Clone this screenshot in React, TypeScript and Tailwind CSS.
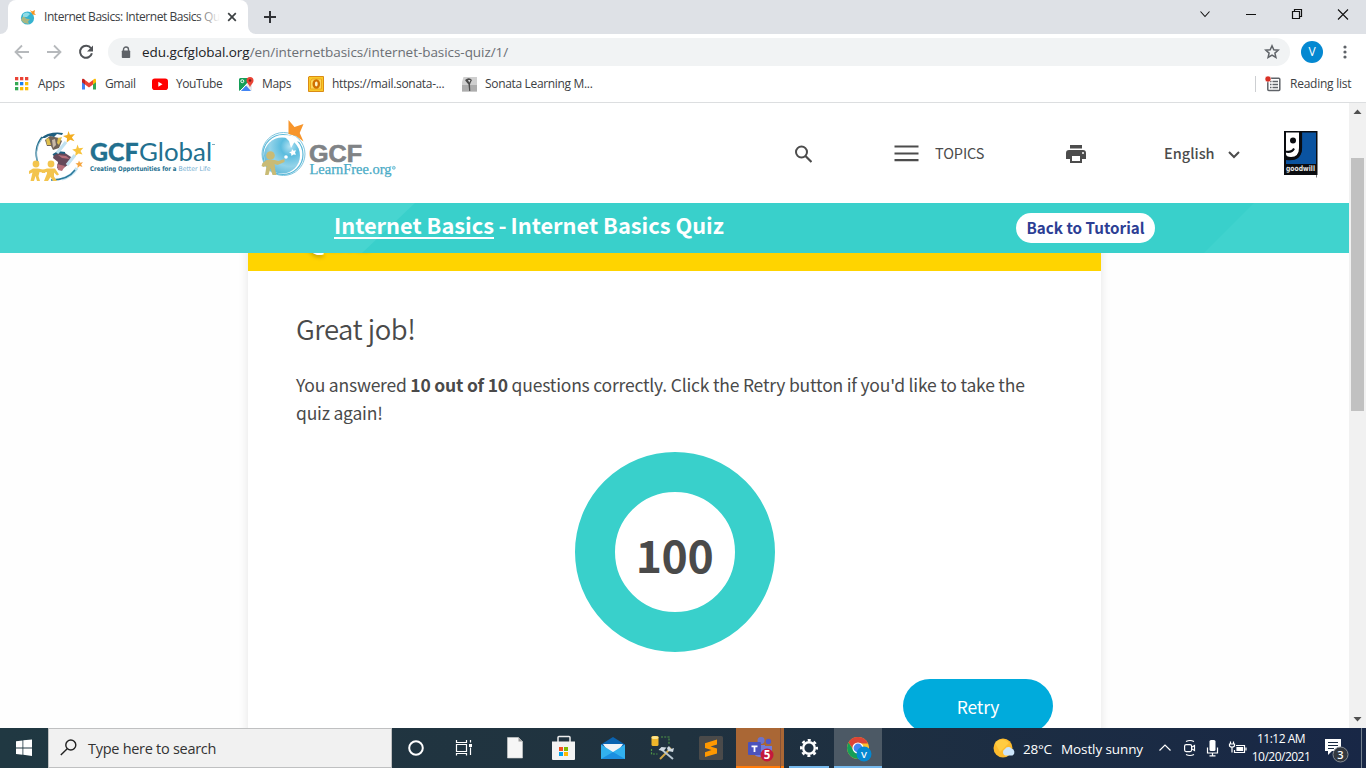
import type { ReactNode } from "react";

const SEGOE = "font-['Open_Sans','Noto_Sans',sans-serif]";
const SOURCE = "font-['Noto_Sans_CJK_SC',sans-serif]";

function Label({ className, children }: { className: string; children: ReactNode }) {
  return <span className={`block shrink-0 whitespace-nowrap ${className}`}>{children}</span>;
}

function Favicon() {
  return (
    <svg width="16" height="16" viewBox="0 0 16 16" className="shrink-0">
      <circle cx="7.500" cy="9" r="6.600" fill="#36b3d0" />
      <path d="M3 5q4-3 7 0l-3 3-4 0z" fill="#8edbe5" />
      <path d="M2 8.500l2-1 2 2 4 1-2 2 1 2.500-5-1-3-3z" fill="#a9b781" />
      <path d="M10 1l2 1.600L15 1l-.6 3.200L16 6l-3.600-.6z" fill="#f7931e" />
    </svg>
  );
}

function TabStrip() {
  return (
    <div className="flex h-[34px] shrink-0 bg-[#dee1e6]">
      <div className="flex w-2 items-end bg-white">
        <div className="h-[34px] w-2 rounded-br-lg bg-[#dee1e6]" />
      </div>
      <div className="flex h-[34px] w-[240px] items-center rounded-t-lg bg-white pl-3">
        <Favicon />
        <div className="relative ml-2 h-4 w-[176px] overflow-hidden">
          <Label className={`${SEGOE} text-[12px] leading-4 tracking-[-0.45px] text-[#3c4043]`}>
            Internet Basics: Internet Basics Quiz
          </Label>
          <div className="absolute right-0 top-0 h-4 w-6 bg-gradient-to-r from-white/0 to-white" />
        </div>
        <svg width="10" height="10" viewBox="0 0 10 10" className="ml-[7px] shrink-0">
          <path d="M1.200 1.200l7.600 7.600M8.800 1.200L1.200 8.800" stroke="#3c4043" strokeWidth="1.700" />
        </svg>
      </div>
      <div className="flex w-2 items-end bg-white">
        <div className="h-[34px] w-2 rounded-bl-lg bg-[#dee1e6]" />
      </div>
      <svg width="12" height="12" viewBox="0 0 12 12" className="ml-2 mt-[11px]">
        <path d="M6 0v12M0 6h12" stroke="#303236" strokeWidth="2" />
      </svg>
      <div className="flex-1" />
      <svg width="166" height="34" viewBox="0 0 166 34" fill="none" stroke="#111">
        <path d="M.5 11.500l4.500 5 4.500-5" strokeWidth="1.100" />
        <path d="M46 14.500h10" />
        <path d="M92.500 11.500h7v7h-7zM94.500 11.500v-2h7v7h-2" strokeWidth="1.200" />
        <path d="M138 9.500l10 10M148 9.500l-10 10" strokeWidth="1.100" />
      </svg>
    </div>
  );
}

function Toolbar() {
  return (
    <div className="flex h-[36px] shrink-0 items-center bg-white">
      <svg width="108" height="36" viewBox="0 0 108 36" fill="none" strokeWidth="1.800" className="shrink-0">
        <path d="M29 18H16M22 11.500L15.500 18l6.500 6.500" stroke="#b6b9bc" />
        <path d="M47 18h13M54 11.500l6.500 6.500-6.500 6.500" stroke="#b6b9bc" />
        <path d="M91 14.300a6 6 0 1 0 .9 4.900" stroke="#505357" strokeWidth="2" />
        <path d="M93 11.500v6h-6z" fill="#505357" />
      </svg>
      <div className="flex h-7 w-[1182px] shrink-0 items-center rounded-full bg-[#f1f3f4]">
        <svg width="10" height="13" viewBox="0 0 10 13" className="ml-[13px] shrink-0">
          <path d="M2.500 5V3.500a2.500 2.500 0 0 1 5 0V5" fill="none" stroke="#5f6368" strokeWidth="1.400" />
          <rect x=".8" y="4.500" width="8.400" height="7.500" rx=".8" fill="#5f6368" />
        </svg>
        <Label className={`${SEGOE} ml-[11px] w-[380px] text-[13.500px] leading-7 tracking-[-0.055px] text-[#6b6f74]`}>
          <span className="text-[#202124]">edu.gcfglobal.org</span>/en/internetbasics/internet-basics-quiz/1/
        </Label>
        <div className="flex-1" />
        <svg width="16" height="16" viewBox="0 0 16 16" className="mr-[10px]">
          <path d="M8 1.800l1.800 4 4.400.4-3.300 2.900 1 4.300L8 11.100l-3.900 2.300 1-4.300L1.800 6.200l4.400-.4z" fill="none" stroke="#5f6368" strokeWidth="1.500" />
        </svg>
      </div>
      <div className={`${SEGOE} ml-[11px] flex size-[22px] items-center justify-center rounded-full bg-[#0488d1] text-[12px] text-white`}>V</div>
      <svg width="4" height="16" viewBox="0 0 4 16" fill="#5f6368" className="ml-5">
        <circle cx="2" cy="3" r="1.600" />
        <circle cx="2" cy="8" r="1.600" />
        <circle cx="2" cy="13" r="1.600" />
      </svg>
    </div>
  );
}

function Bookmark({ icon, label, box, text }: { icon: ReactNode; label: string; box: string; text: string }) {
  return (
    <div className={`flex shrink-0 items-center ${box}`}>
      <div className="w-4 shrink-0">{icon}</div>
      <Label className={`${SEGOE} ml-2 text-[12px] leading-4 text-[#3c4043] ${text}`}>{label}</Label>
    </div>
  );
}

const appDots = ["#ea4335", "#ea4335", "#ea4335", "#34a853", "#1a80f0", "#fbbc05", "#34a853", "#fbbc05", "#fbbc05"];

function Bookmarks() {
  return (
    <div className="flex h-[33px] shrink-0 items-center border-b border-[#dcdee0] bg-white pb-[5px] pl-[14px]">
      <Bookmark
        box="w-[67px]"
        text="tracking-[-0.3px]"
        label="Apps"
        icon={
          <svg width="16" height="16" viewBox="0 0 16 16">
            {appDots.map((c, i) => (
              <rect key={i} x={1 + (i % 3) * 5} y={1 + Math.floor(i / 3) * 5} width="3.300" height="3.300" fill={c} />
            ))}
          </svg>
        }
      />
      <Bookmark
        box="w-[71px]"
        text="tracking-[-0.4px]"
        label="Gmail"
        icon={
          <svg width="16" height="16" viewBox="0 0 16 16">
            <path d="M1 4v9.500h3V8z" fill="#4285f4" />
            <path d="M15 4v9.500h-3V8z" fill="#34a853" />
            <path d="M12 4.500V8.500l3-2.300V4c0-1.700-1.700-1.900-3 0z" fill="#fbbc04" />
            <path d="M4 8.500V4L8 7l4-3v4.500L8 11.500z" fill="#ea4335" />
            <path d="M1 4v2.200l3 2.300V4C2.700 2.100 1 2.300 1 4z" fill="#c5221f" />
          </svg>
        }
      />
      <Bookmark
        box="w-[86px]"
        text="tracking-[-0.45px]"
        label="YouTube"
        icon={
          <svg width="16" height="16" viewBox="0 0 16 16">
            <rect y="2.500" width="16" height="11.500" rx="2.800" fill="#f00" />
            <path d="M6.300 5.800v5l4.200-2.500z" fill="#fff" />
          </svg>
        }
      />
      <Bookmark
        box="w-[70px]"
        text="tracking-[-0.35px]"
        label="Maps"
        icon={
          <svg width="16" height="16" viewBox="0 0 16 16">
            <rect x="1" y="2" width="13" height="13" rx="1.500" fill="#e8eaed" />
            <path d="M1 13.500V3.500Q1 2 2.500 2H11l2 6-4-1-6.500 8Q1 15 1 13.500z" fill="#159e58" />
            <path d="M3 15l5-5.500 5 5.500z" fill="#4285f4" />
            <path d="M2 15l10-10" stroke="#fff" strokeWidth="1" />
            <circle cx="4.300" cy="5.200" r="1.500" fill="none" stroke="#fff" />
            <path d="M8.500 4.500a3.500 3.500 0 0 1 7 0c0 2.500-2.500 3.500-3.500 7-1-3.500-3.500-4.500-3.500-7z" fill="#ea4335" />
            <circle cx="12" cy="4.500" r="1.300" fill="#7c2218" />
          </svg>
        }
      />
      <Bookmark
        box="w-[153px]"
        text="tracking-[-0.3px]"
        label="https://mail.sonata-..."
        icon={
          <svg width="16" height="16" viewBox="0 0 16 16">
            <path d="M1 .5h14.500v15H.5V1z" fill="#f8c928" stroke="#db8b15" />
            <path d="M4 3h9.500v10H2.500V5z" fill="#fbd75a" stroke="#eda41c" />
            <ellipse cx="8.300" cy="8" rx="2.600" ry="3.600" fill="#fff3c4" stroke="#d06f00" strokeWidth="2.400" />
          </svg>
        }
      />
      <Bookmark
        box="w-[160px]"
        text="tracking-[-0.33px]"
        label="Sonata Learning M..."
        icon={
          <svg width="16" height="16" viewBox="0 0 16 16">
            <path d="M2.500 1H16v14.500H1V6z" fill="#cfcfcf" />
            <path d="M1 9h15v6.500H1z" fill="#adadad" />
            <path d="M4 4q4-3.500 7 0l-1.300 2.500-.7 2 .3 6.500H8.200l-.7-6.500L5 5.500z" fill="#4b4b4b" />
            <path d="M7 4l2.500 0-1.200 2.500z" fill="#ddd" />
          </svg>
        }
      />
      <div className="flex-1" />
      <div className="h-4 w-px bg-[#cdcfd2]" />
      <svg width="16" height="16" viewBox="0 0 16 16" className="ml-[9px]">
        <rect x="2.800" y="2.300" width="12" height="12.200" rx="1" fill="none" stroke="#5f6368" strokeWidth="1.500" />
        <path d="M5 5.500h1.500M5 8.500h1.500M5 11.500h1.500M7.500 5.500H13M7.500 8.500H13M7.500 11.500H13" stroke="#5f6368" strokeWidth="1.300" />
        <circle cx="3" cy="3" r="3" fill="#d93025" stroke="#fff" strokeWidth=".5" />
      </svg>
      <Label className={`${SEGOE} ml-[9px] w-[76px] text-[12px] leading-4 tracking-[-0.25px] text-[#3c4043]`}>Reading list</Label>
    </div>
  );
}

function GlobalLogo() {
  return (
    <svg width="192" height="56" viewBox="0 0 192 56" className="shrink-0">
      <path d="M13 7A24 25 0 0 0 9 33" fill="none" stroke="#246f8e" strokeWidth="1.500" />
      <path d="M19 4Q5 12 8 31" fill="none" stroke="#8bb9cc" strokeWidth="1" />
      <path d="M12 8q9-7 22-5l-1 2-5-1-3 3-5-1-4 2z" fill="#1f5f7f" />
      <path d="M16 10l5-4 9 2 3 3-3 7-6 2-2-4-4 0z" fill="#6f6358" />
      <path d="M17 9l3-1 2 7-4 0zM29 8l4-1-3 8-2-2z" fill="#dfc04e" />
      <path d="M23 10l3-1 1 6-3 3z" fill="#c8b9a8" />
      <path d="M25 24q6-3 11-1l6 4-2 7-8 6-4-2 1-6-5-4z" fill="#66495a" />
      <path d="M29 25l8 1 4 3-8-1zM28 34l8 2-3 5-4-1z" fill="#b8707b" />
      <path d="M24 25l5-3 7 1" stroke="#1f5f7f" strokeWidth="1.800" fill="none" />
      <path d="M37 12L28 23M46 25L38 35M48 38Q43 46 33 49" stroke="#c2e2f1" strokeWidth="3.200" fill="none" />
      <path d="M46 40q-7 10-24 10" fill="none" stroke="#2a7899" strokeWidth="1.400" />
      <path d="M39.500 1l1.400 3.700 5-.8-3 3.500 2.600 3.800-4.300-1.400-3.500 2.800.3-4.400L34 6l4.300-1z" fill="#f3ae22" />
      <path d="M48.500 14.500l1.400 3.700 4.500-.5-2.900 3.300 2 3.500-4-1.100-3.200 2.500.4-4-3.500-2.300 4-.9z" fill="#f7c33d" />
      <path d="M50 30.500l1 2.300 3-.5-1.900 2.200 1.400 2.400-2.700-.8-2.300 1.800.2-2.800-2.300-1.600 2.700-.6z" fill="#f5a640" />
      <g fill="#f3c44d">
        <circle cx="7" cy="34" r="3.400" />
        <path d="M4 38.500h5l7 1.500v3l-5.500-1-1 4 1.500 5H8l-1.500-5L5 51H1.500l2-8.500L0 44v-3z" />
        <circle cx="22" cy="34" r="3.400" />
        <path d="M18 38.500h8l4 6-2 1-3-3v4l3 4.500h-4l-2.500-4-2.500 4h-4l3-7.500v-1.500l-5 1v-3z" />
      </g>
      <text x="61" y="31" fontFamily="Lato" fontWeight="900" fontSize="25.500" fill="#22708f" stroke="#22708f" strokeWidth=".3" textLength="48.500" lengthAdjust="spacingAndGlyphs">GCF</text>
      <text x="110" y="31" fontFamily="Lato" fontSize="25.500" fill="#22708f" textLength="73" lengthAdjust="spacingAndGlyphs">Global</text>
      <path d="M183 14.500h3" stroke="#7fa9bb" />
      <text x="61" y="41" fontFamily="DejaVu Sans" fontWeight="bold" fontSize="6.500" fill="#246f8e" textLength="86.500" lengthAdjust="spacingAndGlyphs">Creating Opportunities for a</text>
      <text x="149.500" y="41" fontFamily="DejaVu Sans" fontSize="6.500" fill="#70add0" textLength="32" lengthAdjust="spacingAndGlyphs">Better Life</text>
    </svg>
  );
}

function LearnFreeLogo() {
  return (
    <svg width="140" height="62" viewBox="0 0 140 62" className="shrink-0">
      <defs>
        <radialGradient id="orb" cx=".72" cy=".25" r=".85">
          <stop offset="0" stopColor="#b2e2f3" />
          <stop offset=".3" stopColor="#5bbcde" />
          <stop offset=".65" stopColor="#93d3e9" />
          <stop offset="1" stopColor="#5eb7d8" />
        </radialGradient>
      </defs>
      <circle cx="22.500" cy="35" r="21.500" fill="#fff" stroke="#7fc6df" strokeWidth="1" />
      <circle cx="22" cy="35.500" r="20" fill="#fff" stroke="#5ab8d8" strokeWidth="1.200" />
      <circle cx="21" cy="36.500" r="18" fill="url(#orb)" />
      <path d="M23 17q9-3 16 6l-5-1-4 7-2-7z" fill="#fff" />
      <path d="M27.500 1l6 7L42.500 5l-3.800 9 3.800 8.500L35 17l-7.500-2z" fill="#f7952b" />
      <path d="M31 30l1.500 1.700 2.500-.4-1 2.200 1 2.300-2.600-.3-1.900 1.500-.4-2.400-2-1.300 2.400-.8z" fill="#fff" />
      <circle cx="25" cy="38" r="1.800" fill="#fff" />
      <circle cx="9.500" cy="36.500" r="4.300" fill="#c9bb75" />
      <path d="M5.500 41h8l4 1 6-2v3l-7 3-3-1 1 7 1 4h-4l-2-7-2 7H4L5.500 47l-3 1-2-1 1-3z" fill="#c9bb75" />
      <text x="48" y="43" fontFamily="Liberation Sans" fontWeight="bold" fontSize="23" fill="#808386" stroke="#808386" strokeWidth=".6" textLength="53" lengthAdjust="spacingAndGlyphs">GCF</text>
      <text x="48.500" y="54.500" fontFamily="Liberation Serif" fontSize="14" fill="#49abc6" stroke="#49abc6" strokeWidth=".25" textLength="82" lengthAdjust="spacingAndGlyphs">LearnFree.org</text>
      <circle cx="132.800" cy="48.800" r="1.500" fill="#b6dfeb" stroke="#5fb5cd" strokeWidth=".7" />
    </svg>
  );
}

function SiteHeader() {
  return (
    <header className="flex h-[100px] shrink-0 items-center bg-white">
      <div className="pl-[29px] pt-[10px]">
        <GlobalLogo />
      </div>
      <div className="ml-[40px] pb-[6px]">
        <LearnFreeLogo />
      </div>
      <svg width="18" height="18" viewBox="0 0 18 18" className="ml-[393px] mt-px shrink-0">
        <circle cx="7.500" cy="7" r="5.500" fill="none" stroke="#4c4c4c" strokeWidth="2" />
        <path d="M11.500 11l6 6" stroke="#4c4c4c" strokeWidth="2.200" />
      </svg>
      <svg width="25" height="17" viewBox="0 0 25 17" className="ml-[82px] shrink-0">
        <path d="M.5 1.500H24.500M.5 8.500H24.500M.5 15.200H24.500" stroke="#4c4c4c" strokeWidth="2.200" />
      </svg>
      <Label className={`${SOURCE} ml-[16px] w-[50px] text-[14.500px] leading-6 tracking-[-0.1px] text-[#4c4c4c]`}>TOPICS</Label>
      <svg width="20" height="18" viewBox="0 0 20 18" className="ml-[81px] mt-[2px] shrink-0">
        <path d="M4 0h12v3.500H4zM3 5h14a3 3 0 0 1 3 3v6h-4v4H4v-4H0V8a3 3 0 0 1 3-3z" fill="#4c4c4c" />
        <path d="M6 11h8v5H6z" fill="#fff" />
        <circle cx="17" cy="8" r="1" fill="#fff" />
      </svg>
      <Label className={`${SOURCE} ml-[78px] w-[52px] text-[14.500px] font-medium leading-6 text-[#4c4c4c]`}>English</Label>
      <svg width="12" height="8" viewBox="0 0 12 8" className="ml-[12px] mt-[4px] shrink-0">
        <path d="M1 1l5 5 5-5" fill="none" stroke="#4c4c4c" strokeWidth="2" />
      </svg>
      <svg width="35" height="47" viewBox="0 0 35 47" className="ml-[44px] mt-[2px] shrink-0">
        <path d="M0 0h33.500v44H0z" fill="#0a0c10" />
        <path d="M18 1.500h14V33H2v-4q16 2 16-12z" fill="#0a53a0" />
        <path d="M2 1.500h13V17q0 9-8 9-5 0-5-3z" fill="#fff" />
        <path d="M17 1.500V17q-1 11-11 11H2" fill="none" stroke="#0a0c10" strokeWidth="2.200" />
        <circle cx="9" cy="9.500" r="3" fill="#0a0c10" />
        <path d="M1 20.500q7 1.500 9-3" fill="none" stroke="#0a0c10" strokeWidth="2" />
        <text x="2" y="40" fontFamily="DejaVu Sans" fontWeight="bold" fontSize="7.500" fill="#e4e4e4" textLength="29" lengthAdjust="spacingAndGlyphs">goodwill</text>
        <path d="M32.500 44v2.500" stroke="#777" />
      </svg>
    </header>
  );
}

function Banner() {
  return (
    <div className="relative z-10 flex h-[50px] shrink-0 bg-[#39d0cb]">
      <svg width="1349" height="50" viewBox="0 0 1349 50" className="absolute inset-0">
        <path d="M0 0H415L362 50H0z" fill="#47d5d0" />
        <path d="M1254 0h95v50H1204z" fill="#40d3ce" />
      </svg>
      <div className={`${SOURCE} relative flex w-full text-white`}>
        <Label className="ml-[334px] w-[682px] text-[21.800px] font-bold leading-[44px]">
          <span className="underline decoration-2 underline-offset-[3px]">Internet Basics</span>
          <span className="tracking-[-0.5px]"> - </span>
          Internet Basics Quiz
        </Label>
        <div className="mt-[10px] flex h-[30px] w-[139px] items-start justify-center rounded-full bg-white">
          <Label className="text-[15.200px] font-bold leading-[29px] text-[#2c3e94]">Back to Tutorial</Label>
        </div>
      </div>
    </div>
  );
}

function ResultCard() {
  return (
    <main className="flex min-h-0 flex-1 justify-center overflow-hidden bg-[#fefefe]">
      <div className={`${SOURCE} -mt-[30px] h-[540px] w-[853px] shrink-0 bg-white text-[#4a4a4a] shadow-[0_0_10px_rgba(0,0,0,0.1)]`}>
        <div className="flex h-[48px] items-end bg-[#ffd400] pb-[21px] pl-[52px]">
          <Label className="text-[32px] leading-[30px] font-bold text-white [text-shadow:0_2px_4px_rgba(0,0,0,0.25)]">Quiz</Label>
        </div>
        <div className="flex flex-col px-12">
          <Label className="mt-[37px] text-[27.500px] font-[350] leading-[40px] tracking-[-0.5px]">Great job!</Label>
          <div className="mt-[23px] text-[17.500px] leading-7 tracking-[-0.21px]">
            <Label className="">
              You answered <b>10 out of 10</b> questions correctly. Click the Retry button if you'd like to take the
            </Label>
            <Label className="">quiz again!</Label>
          </div>
          <div className="mt-[25px] flex size-[200px] items-center justify-center self-center rounded-full border-[40px] border-[#39d0cb] bg-white">
            <Label className="pt-[4px] text-[44.500px] leading-[60px] font-bold tracking-[-0.4px]">100</Label>
          </div>
          <div className="mt-[27px] flex h-[54px] w-[150px] items-center justify-center self-end rounded-full bg-[#00abdc] text-white">
            <Label className="pt-[1px] text-[17.500px] leading-[54px] tracking-[-0.22px]">Retry</Label>
          </div>
        </div>
      </div>
    </main>
  );
}

function Scrollbar() {
  return (
    <div className="flex w-[17px] shrink-0 flex-col items-center bg-[#f1f1f1]">
      <svg width="17" height="55" viewBox="0 0 17 55">
        <path d="M8.500 6.500l4 4.500h-8z" fill="#505050" />
      </svg>
      <div className="h-[253px] w-[13px] bg-[#c1c1c1]" />
      <div className="flex-1" />
      <svg width="17" height="17" viewBox="0 0 17 17">
        <path d="M8.500 10.500l4-4.500h-8z" fill="#505050" />
      </svg>
    </div>
  );
}

function Slot({ box, children }: { box: string; children: ReactNode }) {
  return (
    <div className={`flex h-10 shrink-0 justify-center ${box}`}>
      <svg width="48" height="40" viewBox="0 0 48 40" className="shrink-0">
        {children}
      </svg>
    </div>
  );
}

function Taskbar() {
  return (
    <footer className="flex h-10 shrink-0 bg-gradient-to-r from-[#203842] via-[#20323f] to-[#182746] text-white">
      <Slot box="w-12">
        <path d="M16 13.300l6.500-.9v7.200H16zM23.300 12.300L32 11.500v8.100h-8.700zM16 20.500h6.500v6.300L16 26zM23.300 20.500H32V28l-8.700-1.200z" fill="#fff" />
      </Slot>
      <div className="flex h-10 w-[344px] shrink-0 items-center border border-[#bfc0c1] bg-[#f1f1f1]">
        <svg width="17" height="17" viewBox="0 0 17 17" className="ml-[11px] mt-[-2px]" fill="none" stroke="#222" strokeWidth="1.400">
          <circle cx="10.800" cy="6" r="5" />
          <path d="M7.200 9.700L.8 16" />
        </svg>
        <Label className={`${SEGOE} ml-[11px] pt-px text-[14.500px] leading-6 tracking-[-0.28px] text-[#333]`}>Type here to search</Label>
      </div>
      <Slot box="w-12">
        <circle cx="24" cy="20" r="6.800" fill="none" stroke="#fff" strokeWidth="2" />
      </Slot>
      <Slot box="w-12">
        <path d="M16.500 12v2.500h10V12M16.500 27.500v-2h10v2M16.500 16.500h10v7h-10zM30.500 12v2.500M30.500 19.500V27" fill="none" stroke="#fff" strokeWidth="1.200" />
        <path d="M29 16h3v3h-3z" fill="#fff" />
      </Slot>
      <Slot box="ml-[2px] w-[49px]">
        <path d="M16.500 9.500H27.500l4 4V30h-15z" fill="#f6f6f6" stroke="#d0d0d0" strokeWidth=".6" />
        <path d="M27.500 9.500v4h4z" fill="#999" />
      </Slot>
      <Slot box="w-[49px]">
        <path d="M18 14V9.500q0-1 1-1h10q1 0 1 1V14" fill="none" stroke="#eee" strokeWidth="1.500" />
        <path d="M12 13.500h23V31q0 1-1 1H13q-1 0-1-1z" fill="#f3f3f3" />
        <path d="M19 19h4v4h-4z" fill="#f25022" />
        <path d="M24 19h4v4h-4z" fill="#7fba00" />
        <path d="M19 24h4v4h-4z" fill="#00a4ef" />
        <path d="M24 24h4v4h-4z" fill="#ffb900" />
      </Slot>
      <Slot box="w-[49px]">
        <path d="M12 16.500L24 9l12 7.500v5H12z" fill="#0b63b0" />
        <path d="M14 16h20l-6 9h-8z" fill="#f2f4f7" />
        <path d="M12 16.500l12 7.500 12-7.500V31H12z" fill="#32b1ee" />
        <path d="M12 31l12-7 12 7z" fill="#1c8fe0" />
      </Slot>
      <Slot box="w-[49px]">
        <rect x="13.500" y="8" width="7" height="10" rx="1.500" fill="#efb62a" />
        <ellipse cx="17" cy="9.500" rx="3.500" ry="1.500" fill="#ffe48a" />
        <path d="M23 9h8v7M13.500 21v5h6" fill="none" stroke="#4f9547" strokeWidth="1.200" strokeDasharray="2 1.200" />
        <path d="M22 31l11-11" stroke="#d3a847" strokeWidth="2" />
        <path d="M23 21l12 10" stroke="#b9c7d1" strokeWidth="2" />
        <path d="M20.500 22l3-3 5 .5-3 3.500zM31 18l2 3 3-1-1 4-5-1-1-3z" fill="#d0dae2" />
      </Slot>
      <Slot box="w-[49px]">
        <rect x="12" y="8" width="24" height="24" rx="1.500" fill="#4a4a4a" />
        <path d="M30 11.500v5l-6.500 2 6.500 2v5L18 29v-4.800l6.500-2.200-6.500-2v-4.800z" fill="#ff9800" />
      </Slot>
      <Slot box="ml-[1px] w-12 border-b-2 border-[#ff7b0a] bg-[#aa6735]">
        <path d="M44.500 0v40" stroke="#855237" />
        <circle cx="25" cy="12.500" r="3.500" fill="#6d73ca" />
        <circle cx="32.500" cy="13.500" r="2.700" fill="#5059c9" />
        <path d="M17 17h12v12h-6q-6-1-6-8zM29 18h7v6q-2 5-7 5z" fill="#747bd7" />
        <rect x="12" y="14" width="13" height="13" rx="1" fill="#4b53bc" />
        <path d="M15.500 17.500h6v1.700h-2.100V24h-1.800v-4.800h-2.100z" fill="#fff" />
        <circle cx="31" cy="27" r="6.500" fill="#c4183c" />
        <text x="31" y="31" textAnchor="middle" fontFamily="Open Sans" fontWeight="bold" fontSize="11.500" fill="#fff">5</text>
      </Slot>
      <Slot box="ml-[1px] w-12">
        <circle cx="24" cy="20" r="5.800" fill="none" stroke="#fff" strokeWidth="2.400" />
        <circle cx="24" cy="20" r="7.900" fill="none" stroke="#fff" strokeWidth="2.200" strokeDasharray="3.100 3.100" strokeDashoffset="1.500" />
        <path d="M4 39h40" stroke="#76b9ed" strokeWidth="2" />
      </Slot>
      <Slot box="ml-[1px] w-12 bg-[#4c5965]">
        <circle cx="24" cy="20" r="11" fill="#fbc02d" />
        <path d="M14.500 14.500A11 11 0 0 1 34 15.500H24l-4 7z" fill="#db4437" />
        <path d="M14.500 14.500A11 11 0 0 0 24 31l4-8h-8z" fill="#159e58" />
        <circle cx="24" cy="20" r="5" fill="#4285f4" stroke="#fff" strokeWidth="1.200" />
        <circle cx="30" cy="26" r="7.500" fill="#0488d1" />
        <text x="30" y="29.500" textAnchor="middle" fontFamily="Open Sans" fontWeight="600" fontSize="9.500" fill="#fff">V</text>
        <path d="M0 39h48" stroke="#76b9ed" strokeWidth="2" />
      </Slot>
      <div className="flex-1" />
      <div className={`${SEGOE} flex h-10 w-[374px] shrink-0 items-center`}>
        <svg width="24" height="24" viewBox="0 0 24 24">
          <circle cx="11" cy="12" r="9.500" fill="#fdbb2d" />
          <path d="M3 7a9 9 0 0 1 14 0l-9 9z" fill="#ffd34b" opacity=".7" />
          <path d="M13 19.500a3.600 3.600 0 0 1 0-6.500 4 4 0 0 1 6.500-.5 3.800 3.800 0 0 1 1 7z" fill="#cbe5fb" />
        </svg>
        <Label className="ml-[7px] w-[38px] pt-px text-[13.500px] leading-5 tracking-[-0.25px]">28°C</Label>
        <Label className="w-[98px] pt-px text-[13.500px] leading-5 tracking-[-0.1px]">Mostly sunny</Label>
        <svg width="90" height="20" viewBox="0 0 90 20" fill="none" stroke="#fff" strokeWidth="1.200">
          <path d="M.5 12.500L6 7l5.500 5.500" />
          <rect x="25.600" y="6.600" width="7" height="7" rx="1.500" />
          <path d="M33 9l2.500-1.500v5L33 11M27 3.500q4-2 8 0M27 16.500q4 2 8 0" />
          <rect x="50.500" y="2" width="6" height="11" rx="1.500" fill="#fff" stroke="none" />
          <path d="M48.500 9.500v5.500h10V9.500M53.500 15v3M50.500 17.800h6" />
          <path d="M77 7.500h8.500v7H75.500V12M87 9.500v3" />
          <path d="M78 9.500h5.500v3H78z" fill="#fff" />
          <path d="M71.500 3.500v2M74.500 3.500v2M70.500 6h5v2q-2.500 2.500-5 0zM73 10v4.500" />
        </svg>
        <div className="w-[64px] text-center text-[12px] leading-[18px] tracking-[-0.52px]">
          <div className="whitespace-nowrap">11:12 AM</div>
          <div className="whitespace-nowrap">10/20/2021</div>
        </div>
        <svg width="26" height="30" viewBox="0 0 26 30" className="ml-[11px] mt-[2px]">
          <path d="M1 5h16v12H8l-4 4v-4H1z" fill="#fff" />
          <path d="M4 8.500h10M4 11.500h10M4 14.500h6" stroke="#1b2c43" />
          <circle cx="16.500" cy="20.500" r="7.500" fill="#33383f" stroke="#858b92" />
          <text x="16.500" y="24.500" textAnchor="middle" fontFamily="Open Sans" fontWeight="600" fontSize="11" fill="#fff">3</text>
        </svg>
        <div className="flex-1" />
        <div className="mr-1 h-10 w-px bg-[#73808e]" />
      </div>
    </footer>
  );
}

export default function App() {
  return (
    <div className="flex h-[768px] w-[1366px] flex-col overflow-hidden bg-white">
      <TabStrip />
      <Toolbar />
      <Bookmarks />
      <div className="flex min-h-0 flex-1">
        <div className="flex min-w-0 flex-1 flex-col">
          <SiteHeader />
          <Banner />
          <ResultCard />
        </div>
        <Scrollbar />
      </div>
      <Taskbar />
    </div>
  );
}
